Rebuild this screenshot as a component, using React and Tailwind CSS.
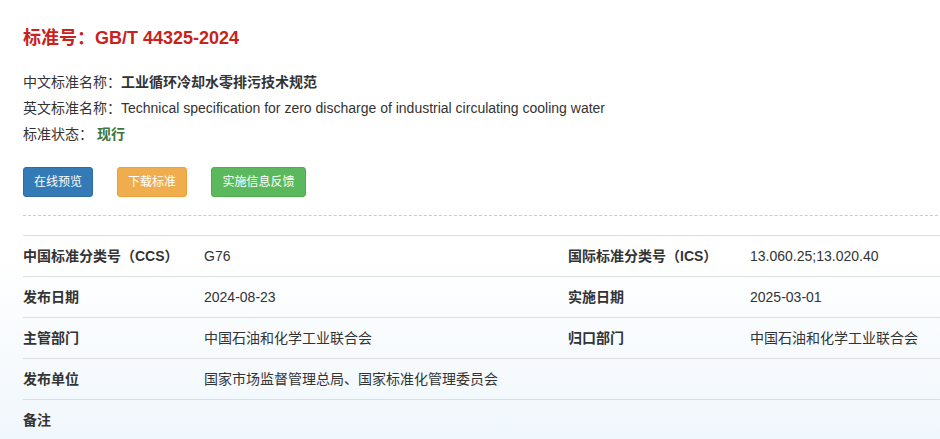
import React from "react";

const rows = [
  ["中国标准分类号（CCS）", "G76", "国际标准分类号（ICS）", "13.060.25;13.020.40"],
  ["发布日期", "2024-08-23", "实施日期", "2025-03-01"],
  ["主管部门", "中国石油和化学工业联合会", "归口部门", "中国石油和化学工业联合会"],
  ["发布单位", "国家市场监督管理总局、国家标准化管理委员会", "", ""],
  ["备注", "", "", ""],
];

export default function App() {
  return (
    <div
      className="w-[940px] h-[439px] overflow-hidden bg-gradient-to-b from-white from-[58%] to-[#f0f7fc] text-[#333]"
      style={{ fontFamily: '"Liberation Sans", Arial, "Noto Sans CJK SC", sans-serif' }}
    >
      <div className="pl-[23px] pt-[26px]">
        <h1 className="text-[18px] font-bold text-[#c9211e] leading-[24px]">标准号：GB/T 44325-2024</h1>
        <div className="mt-[19px] flex flex-col text-[14px] leading-[26px]">
          <div>
            <span>中文标准名称：</span>
            <span className="font-bold">工业循环冷却水零排污技术规范</span>
          </div>
          <div>
            <span>英文标准名称：</span>
            <span>Technical specification for zero discharge of industrial circulating cooling water</span>
          </div>
          <div>
            <span>标准状态：</span>
            <span className="font-bold text-[#3c763d] ml-[4px]">现行</span>
          </div>
        </div>
        <div className="mt-[20px] flex gap-[24px] text-[12px] text-white">
          <button className="w-[70px] h-[30px] rounded-[3px] bg-[#337ab7] border border-[#2e6da4]">在线预览</button>
          <button className="w-[70px] h-[30px] rounded-[3px] bg-[#f0ad4e] border border-[#eea236]">下载标准</button>
          <button className="w-[95px] h-[30px] rounded-[3px] bg-[#5cb85c] border border-[#4cae4c]">实施信息反馈</button>
        </div>
        <div className="mt-[18px] border-t border-dashed border-[#ccc] w-[940px]" />
        <div className="mt-[19px] w-[1000px] border-t border-[#ddd] text-[14px]">
          {rows.map((r, i) => (
            <div key={i} className="flex h-[41px] items-center border-b border-[#ddd]">
              <div className="w-[181px] font-bold">{r[0]}</div>
              <div className="w-[364px]">{r[1]}</div>
              <div className="w-[182px] font-bold">{r[2]}</div>
              <div className="flex-1">{r[3]}</div>
            </div>
          ))}
        </div>
      </div>
    </div>
  );
}
